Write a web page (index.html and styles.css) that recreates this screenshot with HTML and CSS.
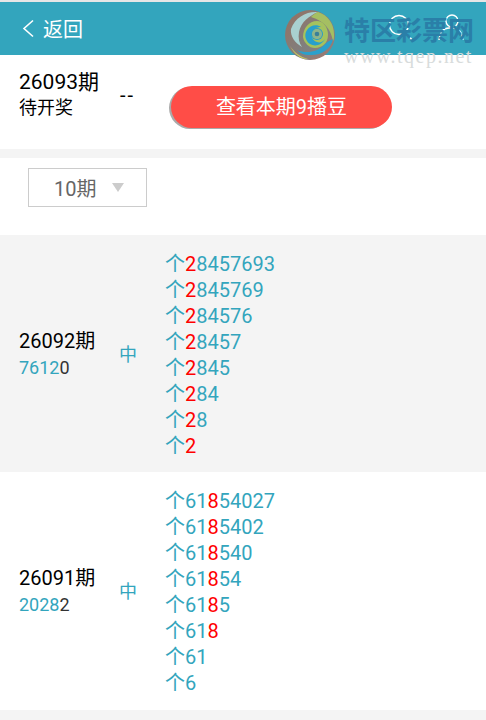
FILE: index.html
```html
<!DOCTYPE html>
<html lang="zh">
<head>
<meta charset="utf-8">
<title>返回</title>
<link rel="stylesheet" href="styles.css">
</head>
<body>
<header class="topbar">
  <div class="back">
    <svg class="back-icon" width="12" height="20" viewBox="0 0 12 20"><path d="M11 1.500 2 9.500l9 8" fill="none" stroke="#fff" stroke-width="1.600"/></svg>
    <span>返回</span>
  </div>
  <div class="tools">
    <svg width="26" height="28" viewBox="0 0 26 28"><circle cx="11" cy="11" r="9.500" fill="none" stroke="#fff" stroke-width="1.400"/><path d="M17.500 18 25 27" stroke="#fff" stroke-width="1.400"/></svg>
    <svg width="28" height="28" viewBox="0 0 28 28"><circle cx="15" cy="7" r="6" fill="none" stroke="#fff" stroke-width="1.400"/><path d="M2 26c1-8 5-12 10-12h4c5 0 9 4 10 12" fill="none" stroke="#fff" stroke-width="1.400"/></svg>
  </div>
</header>
<section class="current">
  <div class="current-info">
    <div class="issue issue-now">26093期</div>
    <div class="pending">待开奖</div>
  </div>
  <div class="dash">--</div>
  <a class="cta">查看本期9播豆</a>
</section>
<section class="filter">
  <div class="select"><span>10期</span><i class="caret"></i></div>
</section>
<section class="row shaded">
  <div class="info">
    <div class="issue">26092期</div>
    <div class="code">7612<span class="dark">0</span></div>
  </div>
  <div class="hit">中</div>
  <ul class="picks">
    <li>个<b>2</b>8457693</li>
    <li>个<b>2</b>845769</li>
    <li>个<b>2</b>84576</li>
    <li>个<b>2</b>8457</li>
    <li>个<b>2</b>845</li>
    <li>个<b>2</b>84</li>
    <li>个<b>2</b>8</li>
    <li>个<b>2</b></li>
  </ul>
</section>
<section class="row">
  <div class="info">
    <div class="issue">26091期</div>
    <div class="code">2028<span class="dark">2</span></div>
  </div>
  <div class="hit">中</div>
  <ul class="picks">
    <li>个61<b>8</b>54027</li>
    <li>个61<b>8</b>5402</li>
    <li>个61<b>8</b>540</li>
    <li>个61<b>8</b>54</li>
    <li>个61<b>8</b>5</li>
    <li>个61<b>8</b></li>
    <li>个61</li>
    <li>个6</li>
  </ul>
</section>
<div class="watermark">
  <svg class="wm-logo" width="52" height="52" viewBox="0 0 52 52">
    <defs>
      <linearGradient id="wmBase" x1="0" y1="0" x2="1" y2="1">
        <stop offset="0" stop-color="#96705f"/>
        <stop offset=".6" stop-color="#7f8080"/>
        <stop offset="1" stop-color="#a5786e"/>
      </linearGradient>
    </defs>
    <circle cx="26" cy="26" r="25" fill="url(#wmBase)"/>
    <path d="M7 20C11 8 23 2 34 3 25 7 17 13 15 23c-1 6 0 11 3 15C11 34 6 27 7 20z" fill="#a9d0cf"/>
    <path d="M34 3c10 3 16 12 16 22 0 3 0 5-1 7-2-11-8-20-22-24 2-2 4-4 7-5z" fill="#a5bf62"/>
    <path d="M49 30c-2 10-12 17-24 16-5 0-9-2-12-5 9 4 21 2 27-5 4-4 7-5 9-6z" fill="#2ba0cc"/>
    <path d="M6 37c4 6 10 11 18 13-7 1-14-5-18-13z" fill="#c4c45e"/>
    <path d="M24 50c7 0 13-2 18-7-4 5-10 8-18 7z" fill="#a8786a"/>
    <path d="M44 26c0 8-6 13-13 13-6 0-11-5-12-11C19 19 25 12 33 12c6 0 11 6 11 14z" fill="#a5c25e"/>
    <path d="M41 30c-3 6-10 8-15 5-5-3-6-10-3-14 3-5 10-6 14-3-4 0-8 2-9 6-1 4 1 8 5 9 3 1 6 0 8-3z" fill="#28a0cc"/>
    <circle cx="33" cy="25" r="6" fill="#2a9cc4"/>
    <path d="M33 20c3 0 5 2 5 5s-2 5-5 5-5-2-5-5 2-5 5-5z" fill="#8fb58a"/>
    <circle cx="33" cy="25" r="2.300" fill="#3a8098"/>
  </svg>
  <div class="wm-text">
    <div class="wm-name">特区彩票网</div>
    <div class="wm-url">www.tqep.net</div>
  </div>
</div>
</body>
</html>
```
FILE: styles.css
```css
* { box-sizing: border-box; }
html, body { margin: 0; padding: 0; }
body {
  position: relative;
  width: 486px;
  height: 720px;
  overflow: hidden;
  background: #f4f4f4;
  font-family: Roboto, "Noto Sans CJK SC", sans-serif;
  font-size: 18px;
  color: #000;
}
.topbar {
  height: 55px;
  background: #33a5bd;
  border-top: 2px solid #e6e6e6;
  display: flex;
  align-items: center;
  justify-content: space-between;
  padding: 0 21px 0 22px;
  color: #fff;
}
.back { display: flex; align-items: center; gap: 9px; font-size: 20px; }
.tools { display: flex; gap: 23px; margin-top: -1px; }
.current {
  height: 94px;
  background: #fff;
  display: flex;
  align-items: flex-start;
  padding: 14px 0 0 19px;
}
.current-info { width: 101px; line-height: 26px; }
.issue { font-size: 20px; }
.issue-now { font-size: 21px; }
.dash { width: 51px; margin-top: 13px; line-height: 26px; font-size: 20px; letter-spacing: 2px; }
.cta {
  width: 221px;
  height: 42px;
  margin-top: 17px;
  border-radius: 21px;
  background: #ff4d47;
  box-shadow: -2px 1px 0 #aaa;
  color: #fff;
  font-size: 20px;
  line-height: 43px;
  text-align: center;
}
.filter {
  height: 77px;
  margin-top: 9px;
  background: #fff;
  padding: 10px 0 0 28px;
}
.select {
  width: 119px;
  height: 39px;
  border: 1px solid #ccc;
  display: flex;
  align-items: center;
  padding-left: 25px;
  gap: 16px;
  color: #666;
  font-size: 20px;
}
.caret {
  width: 0;
  height: 0;
  border-left: 6.500px solid transparent;
  border-right: 6.500px solid transparent;
  border-top: 9px solid #ccc;
}
.row {
  height: 238px;
  background: #fff;
  display: flex;
  align-items: center;
  padding-left: 19px;
}
.row.shaded { height: 237px; background: #f4f4f4; }
.info { width: 101px; line-height: 26px; margin-top: 1px; }
.code { color: #33a5bd; margin-top: 1px; }
.dark { color: #333; }
.hit { width: 45px; color: #33a5bd; font-size: 18px; margin-left: -1px; margin-right: 1px; margin-top: -2px; }
.picks {
  list-style: none;
  margin: 2px 0 0;
  padding: 0;
  font-size: 20px;
  line-height: 26px;
  color: #33a5bd;
}
.picks b { font-weight: 400; color: #f00; }
.watermark {
  position: absolute;
  left: 284px;
  top: 9px;
  display: flex;
  gap: 8px;
}
.wm-text { margin-top: 7px; }
.wm-name {
  font-size: 26px;
  line-height: 30px;
  font-weight: 700;
  color: #2a7fa8;
}
.wm-url {
  font-family: "Liberation Serif", serif;
  font-size: 20px;
  line-height: 16px;
  margin-top: 2px;
  color: #d8dcdc;
  letter-spacing: 1.500px;
}
```
